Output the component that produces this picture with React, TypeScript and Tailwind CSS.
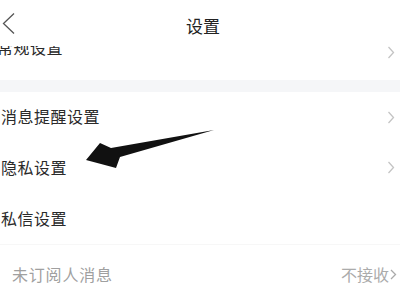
import React from "react";

const font = { fontFamily: '"Noto Sans CJK SC", "Noto Sans", sans-serif' };

function Chevron({ className = "" }: { className?: string }) {
  return (
    <svg width="8" height="13" viewBox="0 0 8 13" className={className}>
      <polyline points="1.5,1 6.5,6.5 1.5,12" fill="none" stroke="#c4c4c4" strokeWidth="1.3" />
    </svg>
  );
}

function Row({ label, h, pad = "", chevron = true }: { label: string; h: string; pad?: string; chevron?: boolean }) {
  return (
    <div className={`flex items-center justify-between pl-[1px] pr-[5px] ${h}`}>
      <span className={`text-[16px] text-[#2a2a2a] tracking-[0.5px] ${pad}`}>{label}</span>
      {chevron && <Chevron />}
    </div>
  );
}

export default function App() {
  return (
    <div className="relative w-[400px] h-[300px] overflow-hidden bg-white" style={font}>
      <div className="relative z-10 h-[46px] bg-white flex items-center justify-center">
        <svg width="16" height="24" viewBox="0 0 16 24" className="absolute left-[1px] top-[12px]">
          <polyline points="13,1.5 2.5,11.5 13,21.5" fill="none" stroke="#555" strokeWidth="1.3" />
        </svg>
        <span className="text-[17px] text-[#222] pl-[6px] pt-[6px]">设置</span>
      </div>
      <div className="-mt-[22px] flex flex-col">
        <div className="flex items-center justify-between pl-0 pr-[5px] h-[56px]">
          <span className="text-[16px] text-[#2a2a2a] tracking-[0.5px] -ml-[3px] -mt-[10px]">常规设置</span>
          <Chevron />
        </div>
        <div className="h-[12px] bg-[#f5f6f8]" />
        <Row label="消息提醒设置" h="h-[50px]" pad="-mt-[2px]" />
        <Row label="隐私设置" h="h-[50px]" />
        <Row label="私信设置" h="h-[52px]" chevron={false} />
        <div className="h-px bg-[#f7f7f7]" />
        <div className="flex items-center justify-between pl-[12px] pr-[3px] h-[58px]">
          <span className="text-[16px] text-[#a0a0a0] tracking-[0.8px]">未订阅人消息</span>
          <span className="text-[16px] text-[#ababab] flex items-center">
            不接收
            <svg width="7" height="11" viewBox="0 0 7 11" className="ml-[1px]">
              <polyline points="1,1 5.5,5.5 1,10" fill="none" stroke="#aaa" strokeWidth="1.3" />
            </svg>
          </span>
        </div>
      </div>
      <svg width="400" height="300" viewBox="0 0 400 300" className="absolute left-0 top-0 pointer-events-none z-20">
        <polygon
          points="86,160 100,143 111,148 214,130 120,157 116,168"
          fill="#111"
        />
      </svg>
    </div>
  );
}
